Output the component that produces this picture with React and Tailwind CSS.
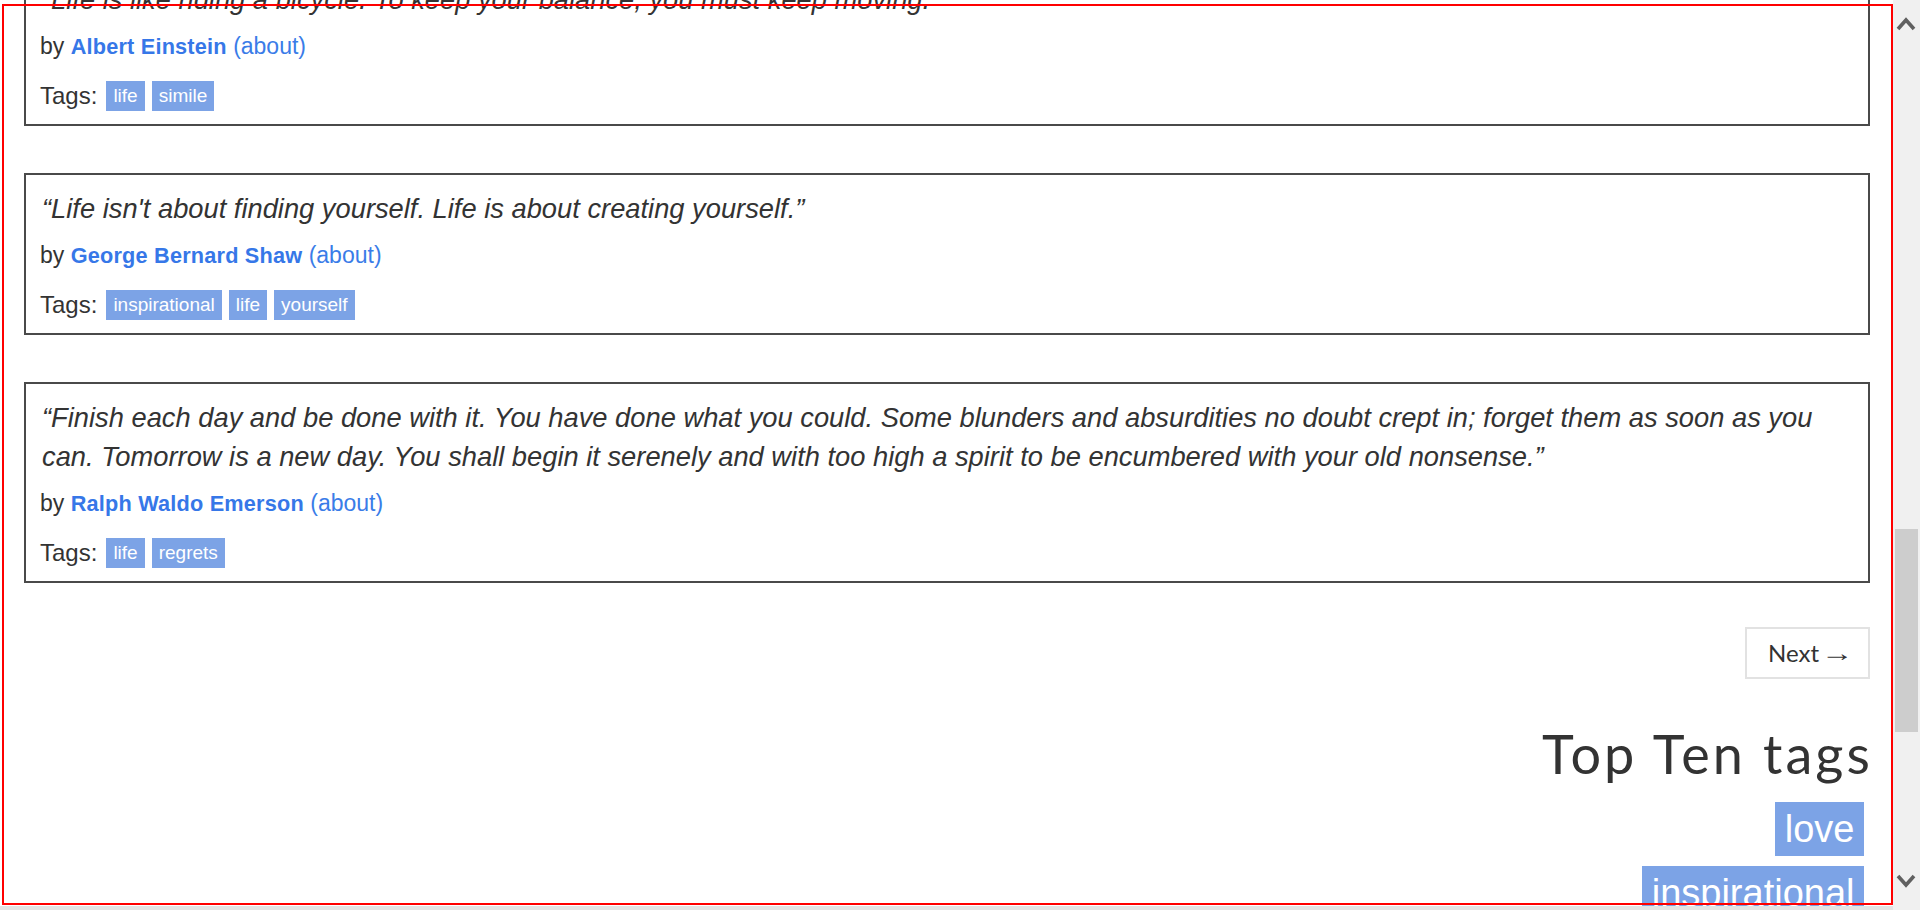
import React from 'react';

const quotes = [
  {
    text: '“Life is like riding a bicycle. To keep your balance, you must keep moving.”',
    author: 'Albert Einstein',
    tags: ['life', 'simile'],
  },
  {
    text: '“Life isn\'t about finding yourself. Life is about creating yourself.”',
    author: 'George Bernard Shaw',
    tags: ['inspirational', 'life', 'yourself'],
  },
  {
    text: '“Finish each day and be done with it. You have done what you could. Some blunders and absurdities no doubt crept in; forget them as soon as you can. Tomorrow is a new day. You shall begin it serenely and with too high a spirit to be encumbered with your old nonsense.”',
    author: 'Ralph Waldo Emerson',
    tags: ['life', 'regrets'],
  },
];

const topTags = ['love', 'inspirational', 'life', 'humor', 'books', 'reading', 'friendship', 'friends', 'truth', 'simile'];

const QuoteCard = ({ quote, first, last }) => (
  <div
    className={
      (first ? 'mt-[-36px] ' : '') +
      (last ? 'mb-[43px] ' : 'mb-[47px] ') +
      'border-2 border-[#4a4a4a] px-[16px] pt-[14px] pb-[12px]'
    }
  >
    <span className="block italic text-[27.3px] leading-[39px] text-[#333]">{quote.text}</span>
    <div className="ml-[-2px] mt-[11px] text-[23px] leading-[32px] text-[#333] whitespace-nowrap">
      by <span className="font-bold text-[21.7px] tracking-[0.2px] text-[#3677e8]">{quote.author}</span>{' '}
      <a className="text-[#3a7ce8]">(about)</a>
    </div>
    <div className="ml-[-2px] mt-[17px] flex h-[32px] items-center gap-[7px] text-[24px] text-[#333]">
      <span className="mr-[2px]">Tags:</span>
      {quote.tags.map((t) => (
        <a key={t} className="h-[30px] bg-[#7ca3e6] px-[7px] text-[19px] leading-[30px] text-white">
          {t}
        </a>
      ))}
    </div>
  </div>
);

const Scrollbar = () => (
  <div className="flex h-[910px] w-[27px] shrink-0 flex-col bg-[#f0f0f0]">
    <svg width="27" height="40" viewBox="0 0 27 40" className="shrink-0">
      <polyline points="5,29 13,20 21,29" fill="none" stroke="#606060" strokeWidth="3.6" />
    </svg>
    <div className="flex-1 px-[1px] pt-[489px]">
      <div className="mx-auto h-[203px] w-[23px] bg-[#cdcdcd]" />
    </div>
    <svg width="27" height="40" viewBox="0 0 27 40" className="mb-[6px] shrink-0">
      <polyline points="5,12 13,21 21,12" fill="none" stroke="#606060" strokeWidth="3.6" />
    </svg>
  </div>
);

export default function App() {
  return (
    <div
      className="relative flex h-[910px] w-[1920px] overflow-hidden bg-white"
      style={{ fontFamily: '"Liberation Sans", Arial, sans-serif' }}
    >
      <div className="h-[910px] flex-1 overflow-hidden pl-[24px] pr-[23px]">
        {quotes.map((q, i) => (
          <QuoteCard key={q.author} quote={q} first={i === 0} last={i === quotes.length - 1} />
        ))}

        <div className="flex justify-end pt-[1px]">
          <a
            className="flex h-[52px] items-center border-2 border-[#e2e2e2] pl-[21px] pr-[17px] text-[24px] text-[#333]"
            style={{ fontFamily: 'Lato, "Liberation Sans", sans-serif' }}
          >
            Next
            <span className="ml-[2px] mr-[6px] inline-block origin-left scale-x-[1.35] font-['Liberation_Sans'] text-[24px]">
              →
            </span>
          </a>
        </div>

        <h2
          className="mr-[-3px] mt-[46px] text-right text-[54px] font-normal leading-[57px] tracking-[3.1px] text-[#333]"
          style={{ fontFamily: 'Lato, "Open Sans", sans-serif' }}
        >
          Top Ten tags
        </h2>

        <div className="mt-[20px] flex flex-col items-end gap-[10px] pr-[6px]">
          {topTags.map((t) => (
            <a key={t} className="h-[54px] bg-[#7ca3e6] px-[9.5px] text-[38px] leading-[54px] text-white">
              {t}
            </a>
          ))}
        </div>
      </div>

      <Scrollbar />

      <div className="pointer-events-none absolute left-[2px] top-[4px] h-[901px] w-[1891px] border-2 border-[#ff0000]" />
      <div className="absolute bottom-0 left-0 h-[4px] w-[1893px] bg-[#e3e3e3]" />
    </div>
  );
}
